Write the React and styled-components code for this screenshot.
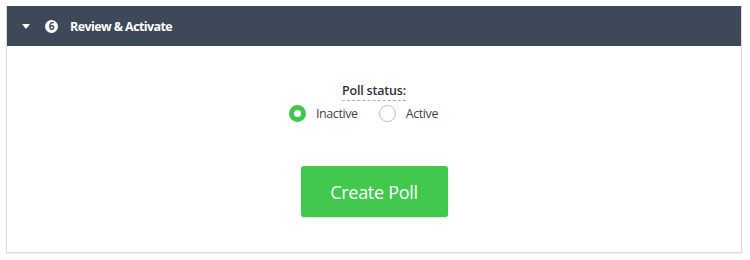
import { createGlobalStyle, styled } from "styled-components";

const Global = createGlobalStyle`
  body {
    margin: 0;
    background: #fff;
    font-family: "Open Sans", "Liberation Sans", sans-serif;
  }
`;

const Page = styled.div`
  padding: 6px 8px 8px 6px;
`;

const Panel = styled.section`
  border: 1px solid #d8dbe0;
  border-top: none;
  box-shadow: 0 1px 1px rgba(0, 0, 0, 0.06);
  background: #fff;
`;

const Header = styled.div`
  height: 40px;
  background: #3d4859;
  display: flex;
  align-items: center;
  padding-left: 15px;
  color: #fff;
`;

const Caret = styled.span`
  width: 0;
  height: 0;
  border-left: 4px solid transparent;
  border-right: 4px solid transparent;
  border-top: 5px solid #fff;
  margin-right: 15px;
`;

const Step = styled.span`
  width: 13px;
  height: 13px;
  border-radius: 50%;
  background: #fff;
  color: #3d4859;
  font-size: 10px;
  font-weight: 700;
  display: flex;
  align-items: center;
  justify-content: center;
  margin-right: 12px;
`;

const Title = styled.h2`
  margin: 0;
  font-size: 12.5px;
  font-weight: 700;
  letter-spacing: -0.6px;
`;

const Body = styled.div`
  display: flex;
  flex-direction: column;
  align-items: center;
  padding: 36px 0 35px;
`;

const Label = styled.div`
  font-size: 12.5px;
  font-weight: 600;
  letter-spacing: -0.2px;
  color: #333;
  border-bottom: 1px dashed #aaa;
  line-height: 18px;
`;

const Options = styled.div`
  display: flex;
  margin-top: 4px;
`;

const Option = styled.label`
  display: flex;
  align-items: center;
  gap: 10px;
  margin-right: 21px;
  font-size: 12.5px;
  letter-spacing: -0.4px;
  color: #444;
`;

const Radio = styled.span`
  width: 17px;
  height: 17px;
  border-radius: 50%;
  box-sizing: border-box;
  background: #fff;
  border: ${(p) => (p.$on ? "5.5px solid #41c54c" : "1px solid #b9bcc2")};
`;

const Button = styled.button`
  margin-top: 44px;
  width: 147px;
  height: 51px;
  border: none;
  border-radius: 3px;
  background: #41c84d;
  color: #fff;
  font-family: inherit;
  font-size: 18px;
  letter-spacing: -0.3px;
  box-shadow: 0 1px 2px rgba(0, 0, 0, 0.15);
`;

export default function App() {
  return (
    <>
      <Global />
      <Page>
        <Panel>
          <Header>
            <Caret />
            <Step>6</Step>
            <Title>Review &amp; Activate</Title>
          </Header>
          <Body>
            <Label>Poll status:</Label>
            <Options>
              <Option>
                <Radio $on />
                Inactive
              </Option>
              <Option>
                <Radio />
                Active
              </Option>
            </Options>
            <Button>Create Poll</Button>
          </Body>
        </Panel>
      </Page>
    </>
  );
}
